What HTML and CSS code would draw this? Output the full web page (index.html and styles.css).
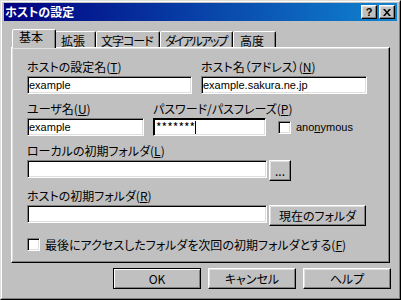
FILE: index.html
```html
<!DOCTYPE html>
<html lang="ja">
<head>
  <meta charset="UTF-8">
  <title>ホストの設定</title>
  <link rel="stylesheet" href="styles.css">
</head>
<body>
  <div class="window">
    <div class="frame">
      <div class="titlebar">
        <span class="title">ホストの設定</span>
        <div class="title-btns">
          <span class="tbtn">?</span>
          <span class="tbtn">
            <svg width="8" height="7" viewBox="0 0 8 7"><path d="M0 0h2l2 2.4 2-2.4h2l-3 3.5 3 3.5h-2l-2-2.4-2 2.4h-2l3-3.5z" fill="#000"/></svg>
          </span>
        </div>
      </div>

      <div class="content">
        <div class="tabs">
          <span class="tab active w-basic">基本</span>
          <span class="tab w-ext">拡張</span>
          <span class="tab narrow w-code">文字コード</span>
          <span class="tab narrow w-dial">ダイアルアップ</span>
          <span class="tab w-adv">高度</span>
        </div>

        <div class="panel">
          <div class="row">
            <div class="field">
              <label>ホストの設定名(<u>T</u>)</label>
              <div class="input w165">example</div>
            </div>
            <div class="field">
              <label>ホスト名（アドレス）(<u>N</u>)</label>
              <div class="input w166">example.sakura.ne.jp</div>
            </div>
          </div>

          <div class="row">
            <div class="field">
              <label>ユーザ名(<u>U</u>)</label>
              <div class="input w117">example</div>
            </div>
            <div class="field">
              <label>パスワード/パスフレーズ(<u>P</u>)</label>
              <div class="input focus w113">*******<span class="caret"></span></div>
            </div>
            <div class="check-line anon">
              <span class="check"></span>
              <span>ano<u>n</u>ymous</span>
            </div>
          </div>

          <div class="row">
            <div class="field">
              <label>ローカルの初期フォルダ(<u>L</u>)</label>
              <div class="line">
                <div class="input w240"></div>
                <button class="btn w22">...</button>
              </div>
            </div>
          </div>

          <div class="row">
            <div class="field">
              <label>ホストの初期フォルダ(<u>R</u>)</label>
              <div class="line">
                <div class="input w240"></div>
                <button class="btn w97">現在のフォルダ</button>
              </div>
            </div>
          </div>

          <div class="check-line last">
            <span class="check"></span>
            <span>最後にアクセスしたフォルダを次回の初期フォルダとする(<u>F</u>)</span>
          </div>
        </div>

        <div class="buttons">
          <button class="btn default">OK</button>
          <button class="btn">キャンセル</button>
          <button class="btn">ヘルプ</button>
        </div>
      </div>
    </div>
  </div>
</body>
</html>
```

FILE: styles.css
```css
body {
  margin: 0;
  background-color: #c0c0c0;
  font-family: "Noto Sans CJK JP", sans-serif;
  font-size: 12px;
  font-feature-settings: "palt";
  color: #000;
}
/* Outer window frame */
.window {
  width: 401px;
  height: 300px;
  box-sizing: border-box;
  border: 1px solid;
  border-color: #dfdfdf #000 #000 #dfdfdf;
  background-color: #c0c0c0;
}
.frame {
  height: 100%;
  box-sizing: border-box;
  border: 1px solid;
  border-color: #fff #808080 #808080 #fff;
  padding: 1px 2px;
}
/* Title bar */
.titlebar {
  height: 18px;
  display: flex;
  align-items: center;
  justify-content: space-between;
  background: linear-gradient(to right, #000080, #1084d0);
  color: #fff;
  padding: 0 2px 0 1px;
}
.title {
  font-weight: bold;
  line-height: 18px;
}
.title-btns {
  display: flex;
  gap: 2px;
}
.tbtn {
  width: 16px;
  height: 14px;
  box-sizing: border-box;
  background-color: #c0c0c0;
  border: 1px solid;
  border-color: #fff #000 #000 #fff;
  box-shadow: inset -1px -1px #808080, inset 1px 1px #dfdfdf;
  display: flex;
  align-items: center;
  justify-content: center;
  color: #000;
  font: bold 11px "Liberation Sans", sans-serif;
}
.content {
  padding: 0 7px;
}
/* Tabs */
.tabs {
  display: flex;
  align-items: flex-end;
  height: 26px;
  padding-left: 3px;
}
.tab {
  height: 16px;
  box-sizing: border-box;
  background-color: #c0c0c0;
  border: 1px solid;
  border-bottom: none;
  border-color: #fff #000 transparent #fff;
  box-shadow: inset -1px 0 #808080;
  border-radius: 2px 2px 0 0;
  padding: 2px 0 0 6px;
  line-height: 13px;
  white-space: nowrap;
}
.tab.narrow {
  letter-spacing: -1px;
  padding-left: 4px;
}
.tab.w-dial {
  letter-spacing: -2px;
}
.tab.active {
  height: 19px;
  margin: 0 -2px -1px;
  padding-top: 0;
  position: relative;
  z-index: 1;
}
.w-basic { width: 40px; }
.w-basic.active { width: 44px; }
.w-ext { width: 42px; }
.w-code { width: 64px; }
.w-dial { width: 73px; }
.w-adv { width: 43px; }
/* Tab page */
.panel {
  height: 216px;
  box-sizing: border-box;
  border: 1px solid;
  border-color: #fff #000 #000 #fff;
  box-shadow: inset -1px -1px #808080, inset 1px 1px #dfdfdf;
  padding: 12px 15px 0;
}
.row {
  display: flex;
  align-items: flex-end;
  gap: 9px;
}
.row + .row {
  margin-top: 8px;
}
.field label {
  display: block;
  width: 0;
  line-height: 13px;
  margin-bottom: 3px;
  white-space: nowrap;
}
.line {
  display: flex;
  align-items: flex-start;
  gap: 2px;
}
.input {
  height: 18px;
  box-sizing: border-box;
  background-color: #fff;
  border: 1px solid;
  border-color: #808080 #fff #fff #808080;
  box-shadow: inset 1px 1px #000, inset -1px -1px #dfdfdf;
  padding: 0 1px;
  font-family: "Liberation Sans", "Noto Sans CJK JP", sans-serif;
  font-size: 11px;
  line-height: 16px;
  white-space: nowrap;
  overflow: hidden;
  display: flex;
  align-items: center;
}
.input.focus {
  border-color: #000 #fff #fff #000;
  font-family: "Noto Sans CJK JP", sans-serif;
  font-size: 12px;
  padding-left: 2px;
}
.caret {
  display: inline-block;
  width: 1px;
  height: 13px;
  background-color: #000;
}
.w165 { width: 165px; }
.w166 { width: 166px; }
.w117 { width: 117px; }
.w113 { width: 113px; }
.w240 { width: 240px; }
/* Checkboxes */
.check-line {
  display: flex;
  align-items: center;
  gap: 5px;
  white-space: nowrap;
}
.check-line.anon {
  height: 18px;
  margin-left: 3px;
  font-family: "Liberation Sans", sans-serif;
  font-size: 11px;
}
.check-line.last {
  margin-top: 11px;
  height: 14px;
}
.check {
  width: 13px;
  height: 13px;
  box-sizing: border-box;
  background-color: #fff;
  border: 1px solid;
  border-color: #808080 #fff #fff #808080;
  box-shadow: inset 1px 1px #000, inset -1px -1px #dfdfdf;
}
/* Push buttons */
.btn {
  width: 88px;
  height: 21px;
  box-sizing: border-box;
  background-color: #c0c0c0;
  border: 1px solid;
  border-color: #fff #000 #000 #fff;
  box-shadow: inset -1px -1px #808080, inset 1px 1px #dfdfdf;
  font: inherit;
  color: #000;
  padding: 0;
  line-height: 17px;
  white-space: nowrap;
}
.btn.w22 { width: 22px; }
.btn.w97 { width: 97px; }
.btn.default {
  border-color: #000;
  box-shadow: inset 1px 1px #fff, inset -1px -1px #808080;
}
.buttons {
  display: flex;
  justify-content: flex-end;
  gap: 7px;
  margin: 5px -1px 0 0;
}
```
